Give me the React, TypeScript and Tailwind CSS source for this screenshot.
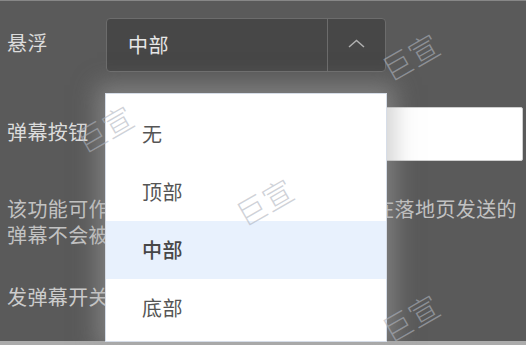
const options = ['无', '顶部', '中部', '底部']

function Watermark({ className }: { className: string }) {
  return (
    <span
      className={`pointer-events-none absolute -translate-x-1/2 -translate-y-1/2 rotate-[-30deg] whitespace-nowrap text-[30px] font-extralight leading-none text-[rgba(175,180,190,0.6)] ${className}`}
    >
      巨宣
    </span>
  )
}

export default function App() {
  const selected = '中部'

  return (
    <div className="relative flex h-[345px] w-[526px] flex-col overflow-hidden border-t border-[#878787] bg-[#5a5a5a] font-['Noto_Sans_CJK_SC',sans-serif] tracking-[0.4px]">
      <div className="flex flex-1 flex-col pl-[7px] pt-[17px]">
        <div className="flex items-center">
          <span className="-mt-1 w-[99px] text-[20px] leading-[26px] text-[#dcdcdc]">悬浮</span>
          <div className="flex h-[54px] w-[280px] rounded-[4px] border border-[#6c6c6c] bg-[#474747]">
            <div className="flex flex-1 items-center pl-[21px] text-[20px] text-[#e6e6e6]">{selected}</div>
            <div className="flex w-[58px] items-center justify-center border-l border-[#6c6c6c]">
              <svg width="17" height="9" viewBox="0 0 17 9" fill="none" className="-mt-1">
                <polyline points="1,8 8.5,1.5 16,8" stroke="#b0b0b0" strokeWidth="1.5" />
              </svg>
            </div>
          </div>
        </div>

        <div className="mt-[35px] flex items-center">
          <span className="-mt-1 w-[99px] text-[20px] leading-[26px] text-[#dcdcdc]">弹幕按钮</span>
          <div className="h-[54px] w-[417px] rounded-[2px] border border-[#cfcfcf] bg-white" />
        </div>

        <div className="mt-[35px] text-[20px] leading-[26px] text-[#c2c2c2]">
          <div className="whitespace-nowrap">该功能可作为互动弹幕的展示开关，用户在落地页发送的</div>
          <div className="whitespace-nowrap">弹幕不会被展示</div>
        </div>

        <div className="mt-[36px] text-[20px] leading-[26px] text-[#cccccc]">发弹幕开关</div>
      </div>
      <div className="h-[4px] bg-[#ababab]" />

      <div className="absolute left-[105px] top-[92px] flex h-[249px] w-[282px] flex-col border border-[#d6dde8] bg-white pt-[11px] shadow-[0_0_22px_8px_rgba(165,165,165,0.5)]">
        {options.map((o) => (
          <div
            key={o}
            className={`flex h-[58px] items-center pl-[36px] text-[20px] ${
              o === selected ? 'bg-[#e8f1fd] font-medium text-[#474747]' : 'text-[#555555]'
            }`}
          >
            {o}
          </div>
        ))}
      </div>

      <Watermark className="left-[410px] top-[55px]" />
      <Watermark className="left-[104px] top-[127px]" />
      <Watermark className="left-[264px] top-[200px]" />
      <Watermark className="left-[410px] top-[316px]" />
    </div>
  )
}
